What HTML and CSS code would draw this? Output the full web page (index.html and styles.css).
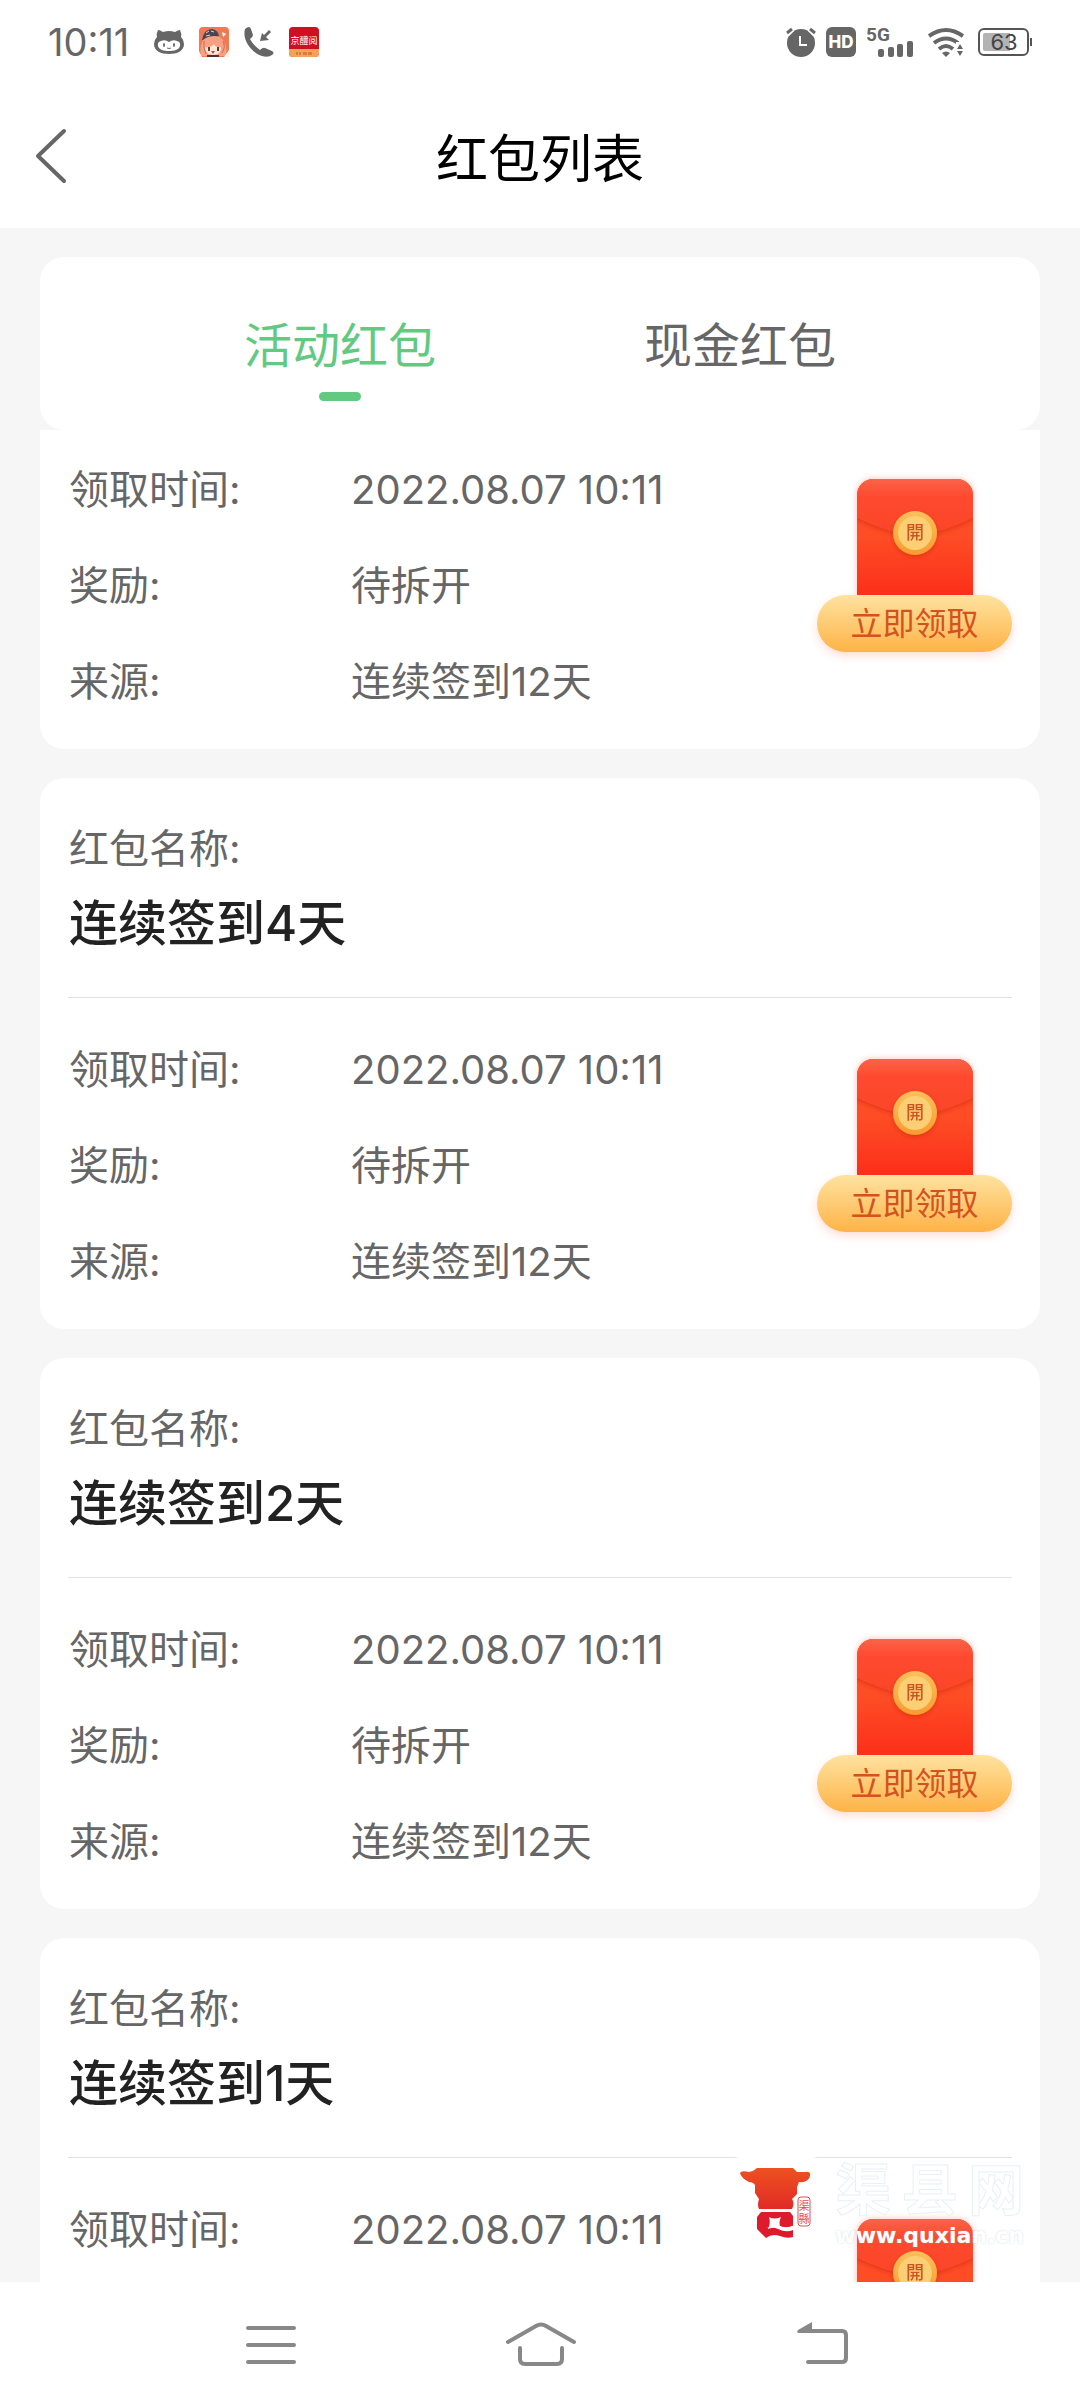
FILE: index.html
```html
<!DOCTYPE html>
<html lang="zh-CN">
<head>
    <meta charset="UTF-8">
    <meta name="viewport" content="width=device-width, initial-scale=1.0">
    <title>红包列表</title>
    <link rel="stylesheet" href="styles.css">
</head>
<body>
    <!-- Shared shapes -->
    <svg class="sprite" aria-hidden="true">
        <defs>
            <linearGradient id="paper" x1="0" y1="0" x2="0" y2="1">
                <stop offset="0" stop-color="#ff4a2c"/>
                <stop offset="0.5" stop-color="#fe4d25"/>
                <stop offset="1" stop-color="#fc2f1a"/>
            </linearGradient>
            <linearGradient id="flap" x1="0" y1="0" x2="0" y2="1">
                <stop offset="0" stop-color="#f9694f"/>
                <stop offset="0.35" stop-color="#fe4a2e"/>
                <stop offset="1" stop-color="#fb4429"/>
            </linearGradient>
            <linearGradient id="coin" x1="0" y1="0" x2="0" y2="1">
                <stop offset="0" stop-color="#fcc05a"/>
                <stop offset="1" stop-color="#fb9a2e"/>
            </linearGradient>
            <linearGradient id="logoRed" x1="0" y1="0" x2="0" y2="1">
                <stop offset="0" stop-color="#ee5121"/>
                <stop offset="1" stop-color="#e02b26"/>
            </linearGradient>
            <filter id="soft" x="-20%" y="-20%" width="140%" height="150%">
                <feDropShadow dx="0" dy="2" stdDeviation="2" flood-color="#c02408" flood-opacity="0.45"/>
            </filter>
            <clipPath id="packetClip">
                <path d="M0 116V16A16 16 0 0 1 16 0H100A16 16 0 0 1 116 16V116Z"/>
            </clipPath>
        </defs>
        <symbol id="packet" viewBox="0 0 116 116">
            <g clip-path="url(#packetClip)">
                <rect width="116" height="116" fill="url(#paper)"/>
                <path d="M-4 -4H120V37Q90 52 58 58Q26 52 -4 37Z" fill="url(#flap)" filter="url(#soft)"/>
            </g>
            <circle cx="58" cy="54" r="22" fill="url(#coin)" filter="url(#soft)"/>
            <circle cx="58" cy="54" r="17" fill="#fdcf74"/>
            <text x="58" y="60" class="coin-text">開</text>
        </symbol>
    </svg>

    <div class="app">
        <div class="status-bar">
            <div class="status-left">
                <span class="clock">10:11</span>
                <svg width="30" height="30" viewBox="0 0 30 30">
                    <path d="M4 3Q6 3 9 5Q15 3 21 5Q24 3 26 3Q28 7 27 10Q30 13 30 17C30 24 23 27 15 27S0 24 0 17Q0 13 3 10Q2 7 4 3Z" fill="#666"/>
                    <path d="M7 14Q11 12 15 15Q19 12 23 14Q27 15 26 19C25 23 20 24 15 24S5 23 4 19Q3 15 7 14Z" fill="#fff"/>
                    <ellipse cx="10" cy="18" rx="1" ry="2" fill="#666"/>
                    <ellipse cx="20" cy="18" rx="1" ry="2" fill="#666"/>
                    <path d="M13 21Q15 22 17 21" stroke="#666" stroke-width="1" fill="none"/>
                </svg>
                <svg width="30" height="30" viewBox="0 0 30 30">
                    <rect width="30" height="30" rx="4" fill="#ee7b55"/>
                    <path d="M3 13Q5 2 13 2Q19 3 20 9L8 13Z" fill="#4a4550"/>
                    <path d="M7 6l3-2M12 4l3 1M7 9l4-1" stroke="#d9d4dc" stroke-width="1"/>
                    <path d="M2 29Q0 18 5 12Q12 7 21 10Q29 16 27 29Z" fill="#f6a184"/>
                    <path d="M6 20Q12 21 15 17Q17 21 22 20Q23 27 14 28Q6 27 6 20Z" fill="#fde7d6"/>
                    <path d="M10 20v4M19 20v4" stroke="#6b2f2c" stroke-width="2"/>
                    <path d="M5 14Q4 22 7 27M24 14Q27 20 23 26" stroke="#d9674d" stroke-width="1" fill="none"/>
                    <path d="M12 24h4l-2 3z" fill="#c9453a"/>
                    <path d="M8 28h12v2H8z" fill="#4b3034"/>
                    <path d="M23 5l4 2-3 3z" fill="#fff"/>
                    <path d="M0 24l3 6H0zM30 23l-5 7h5z" fill="#fff3df"/>
                </svg>
                <svg width="30" height="30" viewBox="0 0 30 30" fill="#666">
                    <path d="M1 2Q3 0 5 0Q6 0 7 2L9 8Q9 10 6 12Q9 18 16 23Q19 20 21 21L28 24Q31 26 28 28Q24 31 18 29C7 25 -2 13 1 2Z"/>
                    <path d="M25 3L27 5L22 10L25 13L16 14L18 6L20 8Z"/>
                </svg>
                <svg width="30" height="30" viewBox="0 0 30 30">
                    <rect width="30" height="30" rx="4" fill="#d01022"/>
                    <path d="M0 22H30V26A4 4 0 0 1 26 30H4A4 4 0 0 1 0 26Z" fill="#f2a458"/>
                    <text x="15" y="17" class="app-text">京醴阅</text>
                    <path d="M8 25v3M11 25v3M15 25v3M17 25v3M20 25v3M22 25v3" stroke="#c4512e" stroke-width="1"/>
                </svg>
            </div>
            <div class="status-right">
                <svg width="30" height="30" viewBox="0 0 30 30">
                    <circle cx="15" cy="16" r="14" fill="#666"/>
                    <path d="M1 7l5-5M29 7l-5-5" stroke="#fff" stroke-width="6"/>
                    <path d="M1 6l5-4M29 6l-5-4" stroke="#666" stroke-width="3"/>
                    <path d="M14 9v9h7" stroke="#fff" stroke-width="2" fill="none"/>
                </svg>
                <svg width="30" height="30" viewBox="0 0 30 30">
                    <rect width="30" height="30" rx="6" fill="#666"/>
                    <text x="15" y="21" class="hd-text">HD</text>
                </svg>
                <svg class="signal" width="48" height="30" viewBox="0 0 48 30" fill="#666">
                    <text x="0" y="14" class="net-text">5G</text>
                    <rect x="12" y="22" width="6" height="8" rx="2"/>
                    <rect x="22" y="20" width="6" height="10" rx="2"/>
                    <rect x="31" y="17" width="6" height="13" rx="2"/>
                    <rect x="41" y="14" width="6" height="16" rx="2"/>
                </svg>
                <svg class="wifi" width="36" height="30" viewBox="0 0 36 30">
                    <g fill="none" stroke="#666" stroke-width="4">
                        <path d="M1 9Q18 -3 35 9"/>
                        <path d="M6 16Q18 7 30 16"/>
                        <path d="M11 22Q18 16 25 22"/>
                    </g>
                    <path d="M14 26Q18 23 22 26L18 30Z" fill="#666"/>
                    <path d="M28 15h8v15h-8z" fill="#fff"/>
                    <path d="M29 22l3-5 3 5zM29 24h6l-3 5z" fill="#666"/>
                </svg>
                <svg width="54" height="28" viewBox="0 0 54 28">
                    <rect x="1" y="1" width="49" height="26" rx="5" fill="none" stroke="#555" stroke-width="2"/>
                    <path d="M5 7Q5 5 7 5H32V23H7Q5 23 5 21Z" fill="#b3b3b3"/>
                    <path d="M52 10h2v8h-2z" fill="#555"/>
                    <text x="26" y="22" class="battery-text">63</text>
                </svg>
            </div>
        </div>

        <header class="title-bar">
            <button class="back" type="button" aria-label="返回">
                <svg width="34" height="56" viewBox="0 0 34 56">
                    <path d="M30 3L4 28L30 53" fill="none" stroke="#666" stroke-width="4" stroke-linecap="round" stroke-linejoin="round"/>
                </svg>
            </button>
            <h1>红包列表</h1>
        </header>

        <main class="content">
            <nav class="tabs">
                <button class="tab active" type="button">活动红包</button>
                <button class="tab" type="button">现金红包</button>
            </nav>

            <div class="list">
                <!-- This card is scrolled half way under the tabs -->
                <article class="card card-cut">
                    <div class="card-body">
                        <dl class="info">
                            <dt>领取时间:</dt><dd>2022.08.07 10:11</dd>
                            <dt>奖励:</dt><dd>待拆开</dd>
                            <dt>来源:</dt><dd>连续签到12天</dd>
                        </dl>
                        <button class="claim" type="button">
                            <svg class="packet"><use href="#packet"/></svg>
                            <span class="claim-label">立即领取</span>
                        </button>
                    </div>
                </article>

                <article class="card">
                    <div class="card-head">
                        <p>红包名称:</p>
                        <h2>连续签到4天</h2>
                    </div>
                    <div class="card-body">
                        <dl class="info">
                            <dt>领取时间:</dt><dd>2022.08.07 10:11</dd>
                            <dt>奖励:</dt><dd>待拆开</dd>
                            <dt>来源:</dt><dd>连续签到12天</dd>
                        </dl>
                        <button class="claim" type="button">
                            <svg class="packet"><use href="#packet"/></svg>
                            <span class="claim-label">立即领取</span>
                        </button>
                    </div>
                </article>

                <article class="card">
                    <div class="card-head">
                        <p>红包名称:</p>
                        <h2>连续签到2天</h2>
                    </div>
                    <div class="card-body">
                        <dl class="info">
                            <dt>领取时间:</dt><dd>2022.08.07 10:11</dd>
                            <dt>奖励:</dt><dd>待拆开</dd>
                            <dt>来源:</dt><dd>连续签到12天</dd>
                        </dl>
                        <button class="claim" type="button">
                            <svg class="packet"><use href="#packet"/></svg>
                            <span class="claim-label">立即领取</span>
                        </button>
                    </div>
                </article>

                <article class="card">
                    <div class="card-head">
                        <p>红包名称:</p>
                        <h2>连续签到1天</h2>
                    </div>
                    <div class="card-body">
                        <dl class="info">
                            <dt>领取时间:</dt><dd>2022.08.07 10:11</dd>
                        </dl>
                        <button class="claim" type="button" aria-label="立即领取">
                            <svg class="packet"><use href="#packet"/></svg>
                        </button>
                    </div>
                </article>
            </div>
        </main>

        <!-- System navigation -->
        <nav class="nav-bar">
            <button type="button" aria-label="菜单">
                <svg width="80" height="48" viewBox="0 0 80 48">
                    <path d="M17 7H63M17 24H63M17 41H63"/>
                </svg>
            </button>
            <button type="button" aria-label="主页">
                <svg width="80" height="48" viewBox="0 0 80 48">
                    <path d="M8 21L36 5Q41 2 46 5L74 21M20 27V38Q20 43 25 43H57Q62 43 62 38V27"/>
                </svg>
            </button>
            <button type="button" aria-label="返回">
                <svg width="80" height="48" viewBox="0 0 80 48">
                    <path d="M32 10H73Q77 10 77 14V37Q77 41 73 41H39"/>
                    <path class="arrow" d="M29 9L43 1V12H30Q27 12 29 9Z"/>
                </svg>
            </button>
        </nav>

        <!-- Site mark -->
        <div class="mark">
            <svg width="94" height="94" viewBox="0 0 94 94">
                <rect width="94" height="94" rx="10" fill="#fff"/>
                <path d="M28 11H64L68 15H76Q82 14 81 19Q79 26 70 25L68 30V37L63 42Q66 46 63 52H30Q28 48 30 42L26 36V28Q24 25 20 25Q12 21 11 16Q12 13 20 15Q25 14 28 11Z" fill="url(#logoRed)"/>
                <path d="M32 55H61L64 59V69Q58 72 50 69Q43 67 38 71Q44 69 49 72Q57 76 64 73V80Q58 82 51 79Q43 76 37 81L28 72V60Z" fill="#e01a2d"/>
                <path d="M40 60Q45 63 52 60Q49 66 52 72Q45 69 39 72Q42 66 40 60Z" fill="#fff"/>
                <path d="M48 69Q56 74 64 70" stroke="#fff" stroke-width="3" fill="none"/>
                <rect x="69" y="40" width="12" height="29" rx="3" fill="#fff" stroke="#e34b57" stroke-width="1"/>
                <text x="75" y="53" class="seal-text">渠</text>
                <text x="75" y="66" class="seal-text">縣</text>
            </svg>
            <div class="mark-words">
                <span class="mark-name"><span>渠</span><span>县</span><span>网</span></span>
                <span class="mark-url">www.quxian.cn</span>
            </div>
        </div>
    </div>
</body>
</html>
```
FILE: styles.css
```css
/* General Layout and Reset */
* {
    margin: 0;
    padding: 0;
    box-sizing: border-box;
}
body {
    font-family: Inter, "Noto Sans CJK SC", sans-serif;
    background-color: #fff;
    color: #666;
}
button {
    font: inherit;
    color: inherit;
    background: none;
    border: none;
    cursor: pointer;
}
svg {
    display: block;
}
.sprite {
    position: absolute;
    width: 0;
    height: 0;
}

.app {
    position: relative;
    display: flex;
    flex-direction: column;
    height: 100vh;
    overflow: hidden;
}

/* Status bar */
.status-bar {
    display: flex;
    justify-content: space-between;
    align-items: center;
    height: 84px;
    padding: 0 48px;
    flex-shrink: 0;
}
.status-left {
    display: flex;
    align-items: center;
    gap: 15px;
}
.status-right {
    display: flex;
    align-items: center;
    gap: 10px;
}
.clock {
    font-size: 38px;
    line-height: 40px;
    margin-right: 10px;
}
.signal {
    overflow: visible;
    margin-right: 4px;
}
.wifi {
    margin-right: 4px;
}
.app-text {
    font-size: 9px;
    fill: #fff;
    text-anchor: middle;
}
.hd-text {
    font-size: 17px;
    font-weight: 800;
    fill: #fff;
    text-anchor: middle;
}
.net-text {
    font-family: Roboto, sans-serif;
    font-size: 19px;
    font-weight: 700;
}
.battery-text {
    font-size: 22px;
    fill: #444;
    text-anchor: middle;
}

/* Title bar */
.title-bar {
    display: grid;
    grid-template-columns: 100px 1fr 100px;
    align-items: center;
    height: 144px;
    flex-shrink: 0;
}
.title-bar h1 {
    padding-top: 8px;
    font-size: 52px;
    font-weight: 400;
    line-height: 72px;
    color: #000;
    text-align: center;
}
.back {
    padding-left: 34px;
}

/* Tabs */
.content {
    flex: 1;
    min-height: 0;
    display: flex;
    flex-direction: column;
    padding: 29px 40px 0;
    background-color: #f6f6f6;
    overflow: hidden;
}
.tabs {
    display: flex;
    padding: 57px 100px 29px;
    border-radius: 24px;
    background-color: #fff;
    flex-shrink: 0;
}
.tab {
    flex: 1;
    display: flex;
    flex-direction: column;
    align-items: center;
    gap: 14px;
    font-size: 48px;
    line-height: 64px;
}
.tab::after {
    content: "";
    width: 42px;
    height: 9px;
    border-radius: 5px;
}
.tab.active {
    color: #62c981;
}
.tab.active::after {
    background-color: #62c981;
}

/* Cards */
.list {
    flex: 1;
    min-height: 0;
    overflow: hidden;
}
.card {
    margin-bottom: 29px;
    padding: 0 28px;
    border-radius: 24px;
    background-color: #fff;
}
.card-head {
    padding: 43px 0 41px 1px;
    border-bottom: 1px solid #e2e2e2;
}
.card-head p {
    font-size: 40px;
    line-height: 56px;
    margin-bottom: 15px;
}
.card-head h2 {
    font-size: 49px;
    font-weight: 500;
    line-height: 64px;
    color: #222;
}
.card-body {
    display: flex;
    justify-content: space-between;
    align-items: flex-start;
    padding: 44px 0 39px 1px;
}
.card-cut {
    border-radius: 0 0 24px 24px;
}
.card-cut .card-body {
    padding-top: 32px;
}
.info {
    display: grid;
    grid-template-columns: 282px auto;
    row-gap: 40px;
    font-size: 40px;
    line-height: 56px;
}

/* Claim button */
.claim {
    display: flex;
    flex-direction: column;
    align-items: center;
    width: 195px;
    margin-top: 17px;
}
.packet {
    width: 116px;
    height: 116px;
    overflow: visible;
    filter: drop-shadow(0 0 3px rgba(255, 70, 40, 0.35));
}
.coin-text {
    font-family: "Noto Sans CJK JP", sans-serif;
    font-size: 18px;
    font-weight: 500;
    fill: #cf5423;
    text-anchor: middle;
}
.claim-label {
    position: relative;
    width: 100%;
    border-radius: 29px;
    background: linear-gradient(#fee3a0, #feb347);
    box-shadow: 0 4px 10px rgba(255, 90, 50, 0.2);
    font-size: 32px;
    line-height: 57px;
    color: #d4521f;
}

/* System navigation */
.nav-bar {
    display: grid;
    grid-template-columns: repeat(3, 1fr);
    align-items: center;
    height: 126px;
    padding: 0 136px;
    flex-shrink: 0;
    background-color: #fff;
}
.nav-bar button {
    display: flex;
    justify-content: center;
}
.nav-bar path {
    fill: none;
    stroke: #888;
    stroke-width: 4;
    stroke-linecap: round;
    stroke-linejoin: round;
}
.nav-bar .arrow {
    fill: #888;
    stroke: none;
}

/* Site mark, lies over the list */
.mark {
    position: absolute;
    right: 56px;
    bottom: 157px;
    display: flex;
    align-items: center;
    gap: 12px;
}
.mark-words {
    display: flex;
    flex-direction: column;
    gap: 8px;
    color: #fff;
}
.mark-name {
    display: flex;
    justify-content: space-between;
    font-size: 56px;
    font-weight: 700;
    line-height: 56px;
    -webkit-text-stroke: 1px #e8f1f4;
}
.mark-url {
    font-family: "DejaVu Sans", sans-serif;
    font-size: 22px;
    font-weight: 700;
    line-height: 20px;
    text-shadow: 0 0 2px rgba(150, 180, 190, 0.5);
}
.seal-text {
    font-size: 11px;
    fill: #e34b57;
    text-anchor: middle;
}
```
